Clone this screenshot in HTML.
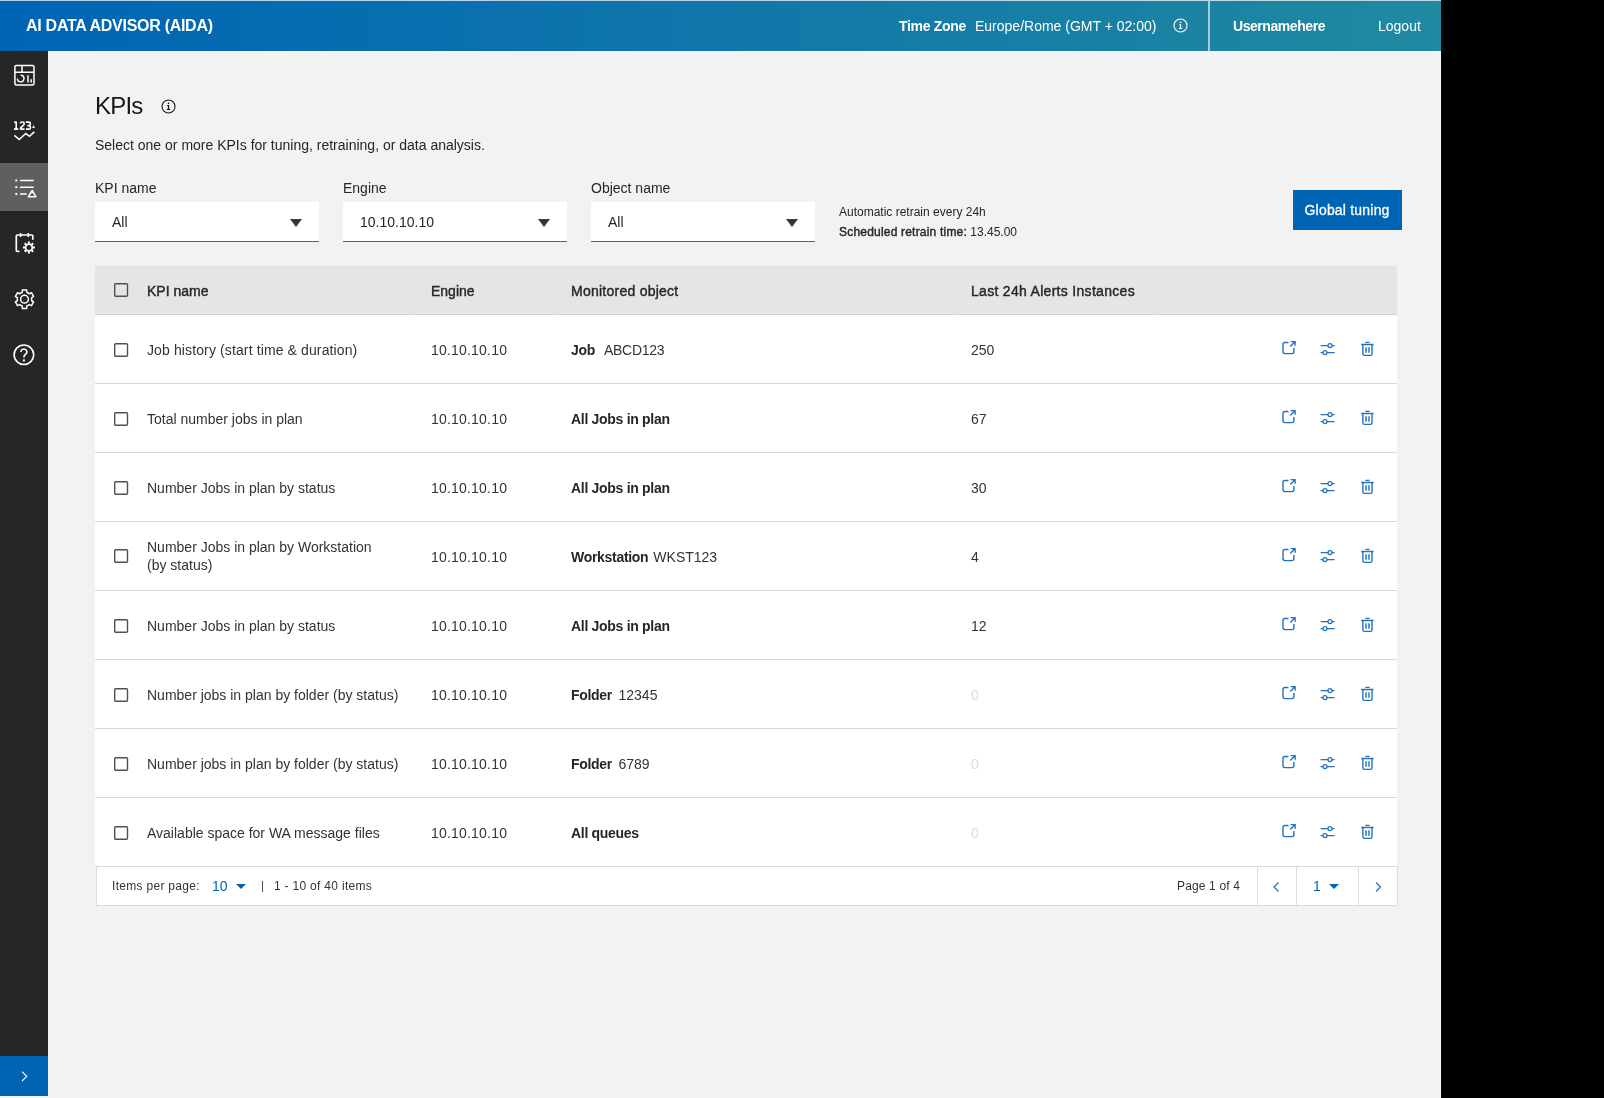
<!DOCTYPE html>
<html><head><meta charset="utf-8"><style>
*{box-sizing:border-box;margin:0;padding:0}
html,body{width:1604px;height:1098px;overflow:hidden;background:#000;font-family:"Liberation Sans",sans-serif;color:#262626}
.abs{position:absolute}
#page{position:absolute;left:0;top:0;width:1441px;height:1098px;background:#f2f2f2;overflow:hidden;will-change:transform}
#hdr{position:absolute;left:0;top:0;width:1441px;height:51px;background:linear-gradient(90deg,#0064b4 0%,#2189a0 100%)}
.ht{position:absolute;color:#fff;font-size:14px;white-space:nowrap;line-height:16px}
.b{-webkit-text-stroke:0.45px currentColor}
.m{-webkit-text-stroke:0.3px currentColor}
#side{position:absolute;left:0;top:51px;width:48px;height:1045px;background:#262626}
.t{position:absolute;white-space:nowrap;font-size:14px;line-height:16px;color:#333333}
.dd{position:absolute;top:202px;width:224px;height:40px;background:#fff;border-bottom:1px solid #626262}
.dd span{position:absolute;left:17px;top:12px;font-size:14px;line-height:16px;color:#262626}
.dd i{position:absolute;left:194.5px;top:17px;width:0;height:0;border-left:6px solid transparent;border-right:6px solid transparent;border-top:8px solid #363636}
#tbl{position:absolute;left:95px;top:266px;width:1302px;height:600px;background:#fff}
.th{position:absolute;left:0;top:0;width:1302px;height:49px;background:#e5e5e5;border-bottom:1px solid #d0d0d0}
.row{position:absolute;left:0;width:1302px;height:69px;border-bottom:1px solid #d8d8d8}
.cb{position:absolute;left:19.4px;width:14px;height:14px}
.c{position:absolute;white-space:nowrap;font-size:14px;line-height:16px;color:#333333}
.ic{position:absolute}
.ob{font-weight:700;letter-spacing:-0.3px;color:#262626}
#pg{position:absolute;left:96px;top:866px;width:1302px;height:40px;background:#fff;border:1px solid #dcdcdc}
.p{position:absolute;white-space:nowrap;font-size:12px;line-height:14px;color:#333333;letter-spacing:0.3px}
</style></head><body>
<div id="page">
<div id="hdr">
<div class="abs" style="left:0;top:0;width:1441px;height:1px;background:rgba(255,255,255,0.7)"></div>
<div class="ht" style="left:26px;top:17.5px;font-size:16px;font-weight:700;letter-spacing:-0.28px">AI DATA ADVISOR (AIDA)</div>
<div class="ht" style="left:899px;top:17.5px;font-weight:700;letter-spacing:-0.3px">Time Zone</div>
<div class="ht" style="left:975px;top:18px">Europe/Rome (GMT + 02:00)</div>
<svg class="abs" style="left:1173px;top:18px" width="15" height="15" viewBox="0 0 15 15"><circle cx="7.5" cy="7.5" r="6.5" fill="none" stroke="#fff" stroke-width="1.1"/><rect x="6.9" y="6.2" width="1.25" height="4.2" fill="#fff"/><circle cx="7.5" cy="4.4" r=".8" fill="#fff"/><rect x="5.9" y="9.9" width="3.3" height="1.1" fill="#fff"/><rect x="6.2" y="6.2" width="1.5" height="1" fill="#fff"/></svg>
<div class="abs" style="left:1208px;top:1px;width:2px;height:50px;background:#a8ccdb"></div>
<div class="ht" style="left:1233px;top:17.5px;font-weight:700;letter-spacing:-0.44px">Usernamehere</div>
<div class="ht" style="left:1378px;top:18px">Logout</div>
</div>
<div id="side">
<div class="abs" style="left:0;top:112px;width:48px;height:48px;background:#5f5f5f"></div>
<div class="abs" style="left:0;top:1005px;width:48px;height:40px;background:#0064b4"></div>
</div>
<svg class="abs" style="left:0;top:51px" width="48" height="1045" viewBox="0 51 48 1045" fill="none" stroke="#fff" stroke-width="1.5">
<rect x="14.9" y="65.6" width="19.1" height="19.3" rx="1.5"/>
<path d="M14.9 72.3 H34 M22 65.6 V72.3"/>
<path d="M20.7 75.3 A3.3 3.3 0 1 1 17.4 78.6" stroke-width="1.4"/>
<path d="M28 75.3 V82.6 M31.2 79.3 V82.6" stroke-width="1.5"/>
<path d="M14.1 122.6 L16.2 122 V129.4 M14 129.1 H18.3 M20.4 123.5 Q20.5 122 22.1 122 H22.7 Q24.2 122 24.2 123.6 Q24.2 124.7 23.1 125.6 L20.6 127.8 V129.1 H24.5 M25.9 122.1 H28.8 Q30.3 122.1 30.3 123.6 V124.3 Q30.3 125.6 28.9 125.6 H27.4 M28.9 125.6 Q30.4 125.6 30.4 127.1 V127.7 Q30.4 129.1 28.9 129.1 H25.9" stroke-width="1.6" stroke-linejoin="round"/>
<path d="M32.1 127.9 L33.55 125.1 L35 127.9Z" fill="#fff" stroke="none"/>
<path d="M14.4 135.3 L19.2 139.5 L25.8 133.5 L29.5 136.3 L34.3 131.8" stroke-width="1.6"/>
<g fill="#fff" stroke="none"><rect x="15.3" y="179.5" width="2" height="2"/><rect x="15.3" y="186.2" width="2" height="2"/><rect x="15.3" y="192.9" width="2" height="2"/></g>
<path d="M20 180.5 H33.7 M20 187.2 H33.7 M20 193.9 H26.6" stroke-width="1.5"/>
<path d="M32.15 190.5 L28.3 196.8 H36 Z" stroke-width="1.45" stroke-linejoin="round"/>
<path d="M19.5 251.3 H17.3 Q16.3 251.3 16.3 250.3 V236 Q16.3 235 17.3 235 H31.8 Q32.8 235 32.8 236 V239.7" stroke-width="1.7"/>
<path d="M20.6 233 V237 M28.3 233 V237" stroke-width="1.6"/>
<circle cx="28.9" cy="247.5" r="3.4" stroke-width="1.8"/>
<path d="M32.90 247.50 L34.90 247.50 M31.73 250.33 L33.14 251.74 M28.90 251.50 L28.90 253.50 M26.07 250.33 L24.66 251.74 M24.90 247.50 L22.90 247.50 M26.07 244.67 L24.66 243.26 M28.90 243.50 L28.90 241.50 M31.73 244.67 L33.14 243.26" stroke-width="2"/>
<path d="M28.10 292.96 L26.84 292.39 L26.64 289.94 L22.36 289.94 L22.16 292.39 L20.90 292.96 L19.78 293.77 L17.55 292.72 L15.42 296.42 L17.43 297.83 L17.30 299.20 L17.43 300.57 L15.42 301.98 L17.55 305.68 L19.78 304.63 L20.90 305.44 L22.16 306.01 L22.36 308.46 L26.64 308.46 L26.84 306.01 L28.10 305.44 L29.22 304.63 L31.45 305.68 L33.58 301.98 L31.57 300.57 L31.70 299.20 L31.57 297.83 L33.58 296.42 L31.45 292.72 L29.22 293.77Z" stroke-width="1.5" stroke-linejoin="round"/>
<circle cx="24.5" cy="299.2" r="3.9" stroke-width="1.5"/>
<circle cx="23.9" cy="354.75" r="9.8" stroke-width="1.6"/>
<path d="M20.9 351.9 A3 2.9 0 1 1 25.6 354.3 Q23.9 355.3 23.9 357.4" stroke-width="1.6"/>
<rect x="22.9" y="359.4" width="2" height="2" fill="#fff" stroke="none"/>
<path d="M22 1071.6 L26.8 1076.3 L22 1081" stroke-width="1.1"/>
</svg>
<div class="t" style="left:95px;top:94px;font-size:24px;line-height:24px;color:#161616;letter-spacing:-0.8px">KPIs</div>
<svg class="abs" style="left:161px;top:99px" width="15" height="15" viewBox="0 0 15 15"><circle cx="7.5" cy="7.5" r="6.5" fill="none" stroke="#161616" stroke-width="1.1"/><rect x="6.9" y="6.2" width="1.25" height="4.2" fill="#161616"/><circle cx="7.5" cy="4.4" r=".8" fill="#161616"/><rect x="5.9" y="9.9" width="3.3" height="1.1" fill="#161616"/><rect x="6.2" y="6.2" width="1.5" height="1" fill="#161616"/></svg>
<div class="t" style="left:95px;top:137px;color:#262626">Select one or more KPIs for tuning, retraining, or data analysis.</div>
<div class="t" style="left:95px;top:180px;color:#262626">KPI name</div>
<div class="t" style="left:343px;top:180px;color:#262626">Engine</div>
<div class="t" style="left:591px;top:180px;color:#262626">Object name</div>
<div class="dd" style="left:95px"><span>All</span><i></i></div>
<div class="dd" style="left:343px"><span>10.10.10.10</span><i></i></div>
<div class="dd" style="left:591px"><span>All</span><i></i></div>
<div class="t" style="left:839px;top:205px;font-size:12px;line-height:14px;color:#262626">Automatic retrain every 24h</div>
<div class="t" style="left:839px;top:225px;font-size:12px;line-height:14px;color:#262626"><span class="b" style="-webkit-text-stroke-width:0.4px;letter-spacing:0.2px">Scheduled retrain time:</span> 13.45.00</div>
<div class="abs" style="left:1292.5px;top:190px;width:109px;height:40px;background:#0064b4"></div>
<div class="ht m" style="left:1304.5px;top:202px;letter-spacing:0.2px">Global tuning</div>
<div id="tbl">
<div class="th">
<div class="cb" style="top:17px"><svg width="15" height="14" viewBox="0 0 15 14"><rect x="0.7" y="0.7" width="12.8" height="12.6" rx="1" fill="none" stroke="#505050" stroke-width="1.4"/></svg></div>
<div class="c m" style="left:52px;top:16.5px;color:#262626;letter-spacing:0px;-webkit-text-stroke-width:0.4px">KPI name</div>
<div class="c m" style="left:336px;top:16.5px;color:#262626;letter-spacing:0px;-webkit-text-stroke-width:0.4px">Engine</div>
<div class="c m" style="left:476px;top:16.5px;color:#262626;letter-spacing:0.25px;-webkit-text-stroke-width:0.4px">Monitored object</div>
<div class="c m" style="left:876px;top:16.5px;color:#262626;letter-spacing:0.3px;-webkit-text-stroke-width:0.4px">Last 24h Alerts Instances</div>
</div>
<div class="row" style="top:49px">
<div class="cb" style="top:28px"><svg width="15" height="14" viewBox="0 0 15 14"><rect x="0.7" y="0.7" width="12.8" height="12.6" rx="1" fill="none" stroke="#505050" stroke-width="1.4"/></svg></div>
<div class="c" style="left:52px;top:26.5px;letter-spacing:0.12px">Job history (start time &amp; duration)</div>
<div class="c" style="left:336px;top:26.5px;letter-spacing:0.2px">10.10.10.10</div>
<div class="c" style="left:476px;top:26.5px"><b class="ob">Job</b><span style="margin-left:9px;letter-spacing:-0.3px">ABCD123</span></div>
<div class="c" style="left:876px;top:26.5px;color:#333333">250</div>
</div>
<div class="row" style="top:118px">
<div class="cb" style="top:28px"><svg width="15" height="14" viewBox="0 0 15 14"><rect x="0.7" y="0.7" width="12.8" height="12.6" rx="1" fill="none" stroke="#505050" stroke-width="1.4"/></svg></div>
<div class="c" style="left:52px;top:26.5px;letter-spacing:0px">Total number jobs in plan</div>
<div class="c" style="left:336px;top:26.5px;letter-spacing:0.2px">10.10.10.10</div>
<div class="c" style="left:476px;top:26.5px"><b class="ob">All Jobs in plan</b></div>
<div class="c" style="left:876px;top:26.5px;color:#333333">67</div>
</div>
<div class="row" style="top:187px">
<div class="cb" style="top:28px"><svg width="15" height="14" viewBox="0 0 15 14"><rect x="0.7" y="0.7" width="12.8" height="12.6" rx="1" fill="none" stroke="#505050" stroke-width="1.4"/></svg></div>
<div class="c" style="left:52px;top:26.5px;letter-spacing:0px">Number Jobs in plan by status</div>
<div class="c" style="left:336px;top:26.5px;letter-spacing:0.2px">10.10.10.10</div>
<div class="c" style="left:476px;top:26.5px"><b class="ob">All Jobs in plan</b></div>
<div class="c" style="left:876px;top:26.5px;color:#333333">30</div>
</div>
<div class="row" style="top:256px">
<div class="cb" style="top:27px"><svg width="15" height="14" viewBox="0 0 15 14"><rect x="0.7" y="0.7" width="12.8" height="12.6" rx="1" fill="none" stroke="#505050" stroke-width="1.4"/></svg></div>
<div class="c" style="left:52px;top:17px;line-height:17.5px">Number Jobs in plan by Workstation<br>(by status)</div>
<div class="c" style="left:336px;top:26.5px;letter-spacing:0.2px">10.10.10.10</div>
<div class="c" style="left:476px;top:26.5px"><b class="ob">Workstation</b><span style="margin-left:5px">WKST123</span></div>
<div class="c" style="left:876px;top:26.5px;color:#333333">4</div>
</div>
<div class="row" style="top:325px">
<div class="cb" style="top:28px"><svg width="15" height="14" viewBox="0 0 15 14"><rect x="0.7" y="0.7" width="12.8" height="12.6" rx="1" fill="none" stroke="#505050" stroke-width="1.4"/></svg></div>
<div class="c" style="left:52px;top:26.5px;letter-spacing:0px">Number Jobs in plan by status</div>
<div class="c" style="left:336px;top:26.5px;letter-spacing:0.2px">10.10.10.10</div>
<div class="c" style="left:476px;top:26.5px"><b class="ob">All Jobs in plan</b></div>
<div class="c" style="left:876px;top:26.5px;color:#333333">12</div>
</div>
<div class="row" style="top:394px">
<div class="cb" style="top:28px"><svg width="15" height="14" viewBox="0 0 15 14"><rect x="0.7" y="0.7" width="12.8" height="12.6" rx="1" fill="none" stroke="#505050" stroke-width="1.4"/></svg></div>
<div class="c" style="left:52px;top:26.5px;letter-spacing:0px">Number jobs in plan by folder (by status)</div>
<div class="c" style="left:336px;top:26.5px;letter-spacing:0.2px">10.10.10.10</div>
<div class="c" style="left:476px;top:26.5px"><b class="ob">Folder</b><span style="margin-left:6.5px">12345</span></div>
<div class="c" style="left:876px;top:26.5px;color:#dcdcdc">0</div>
</div>
<div class="row" style="top:463px">
<div class="cb" style="top:28px"><svg width="15" height="14" viewBox="0 0 15 14"><rect x="0.7" y="0.7" width="12.8" height="12.6" rx="1" fill="none" stroke="#505050" stroke-width="1.4"/></svg></div>
<div class="c" style="left:52px;top:26.5px;letter-spacing:0px">Number jobs in plan by folder (by status)</div>
<div class="c" style="left:336px;top:26.5px;letter-spacing:0.2px">10.10.10.10</div>
<div class="c" style="left:476px;top:26.5px"><b class="ob">Folder</b><span style="margin-left:6.5px">6789</span></div>
<div class="c" style="left:876px;top:26.5px;color:#dcdcdc">0</div>
</div>
<div class="row" style="top:532px">
<div class="cb" style="top:28px"><svg width="15" height="14" viewBox="0 0 15 14"><rect x="0.7" y="0.7" width="12.8" height="12.6" rx="1" fill="none" stroke="#505050" stroke-width="1.4"/></svg></div>
<div class="c" style="left:52px;top:26.5px;letter-spacing:0px">Available space for WA message files</div>
<div class="c" style="left:336px;top:26.5px;letter-spacing:0.2px">10.10.10.10</div>
<div class="c" style="left:476px;top:26.5px"><b class="ob">All queues</b></div>
<div class="c" style="left:876px;top:26.5px;color:#dcdcdc">0</div>
</div>
</div>
<svg class="ic" style="left:1278px;top:337px" width="22" height="22" viewBox="0 0 22 22" fill="none" stroke="#2372bf" stroke-width="1.4"><path d="M10.5 5.5 H7 Q5 5.5 5 7.5 V14.6 Q5 16.6 7 16.6 H13.9 Q15.9 16.6 15.9 14.6 V11"/><path d="M12.3 9.4 L16.6 5.1 M12.6 4.6 H17.1 V8.8"/></svg>
<svg class="ic" style="left:1316px;top:337px" width="22" height="22" viewBox="0 0 22 22" fill="none" stroke="#2372bf" stroke-width="1.3"><path d="M4.6 8.6 H12 M16 8.6 H18.6 M4.6 15.6 H7 M11 15.6 H18.6"/><circle cx="14" cy="8.6" r="2"/><circle cx="9" cy="15.6" r="2"/></svg>
<svg class="ic" style="left:1356px;top:337px" width="22" height="22" viewBox="0 0 22 22" fill="none" stroke="#2372bf" stroke-width="1.4"><path d="M9.4 5.4 H13.6 M5.2 7.5 H17.6"/><path d="M6.9 7.5 V16.8 Q6.9 18.4 8.5 18.4 H14.4 Q16 18.4 16 16.8 V7.5"/><path d="M10 10.2 V15.8 M13 10.2 V15.8" stroke-width="1.45"/></svg>
<svg class="ic" style="left:1278px;top:406px" width="22" height="22" viewBox="0 0 22 22" fill="none" stroke="#2372bf" stroke-width="1.4"><path d="M10.5 5.5 H7 Q5 5.5 5 7.5 V14.6 Q5 16.6 7 16.6 H13.9 Q15.9 16.6 15.9 14.6 V11"/><path d="M12.3 9.4 L16.6 5.1 M12.6 4.6 H17.1 V8.8"/></svg>
<svg class="ic" style="left:1316px;top:406px" width="22" height="22" viewBox="0 0 22 22" fill="none" stroke="#2372bf" stroke-width="1.3"><path d="M4.6 8.6 H12 M16 8.6 H18.6 M4.6 15.6 H7 M11 15.6 H18.6"/><circle cx="14" cy="8.6" r="2"/><circle cx="9" cy="15.6" r="2"/></svg>
<svg class="ic" style="left:1356px;top:406px" width="22" height="22" viewBox="0 0 22 22" fill="none" stroke="#2372bf" stroke-width="1.4"><path d="M9.4 5.4 H13.6 M5.2 7.5 H17.6"/><path d="M6.9 7.5 V16.8 Q6.9 18.4 8.5 18.4 H14.4 Q16 18.4 16 16.8 V7.5"/><path d="M10 10.2 V15.8 M13 10.2 V15.8" stroke-width="1.45"/></svg>
<svg class="ic" style="left:1278px;top:475px" width="22" height="22" viewBox="0 0 22 22" fill="none" stroke="#2372bf" stroke-width="1.4"><path d="M10.5 5.5 H7 Q5 5.5 5 7.5 V14.6 Q5 16.6 7 16.6 H13.9 Q15.9 16.6 15.9 14.6 V11"/><path d="M12.3 9.4 L16.6 5.1 M12.6 4.6 H17.1 V8.8"/></svg>
<svg class="ic" style="left:1316px;top:475px" width="22" height="22" viewBox="0 0 22 22" fill="none" stroke="#2372bf" stroke-width="1.3"><path d="M4.6 8.6 H12 M16 8.6 H18.6 M4.6 15.6 H7 M11 15.6 H18.6"/><circle cx="14" cy="8.6" r="2"/><circle cx="9" cy="15.6" r="2"/></svg>
<svg class="ic" style="left:1356px;top:475px" width="22" height="22" viewBox="0 0 22 22" fill="none" stroke="#2372bf" stroke-width="1.4"><path d="M9.4 5.4 H13.6 M5.2 7.5 H17.6"/><path d="M6.9 7.5 V16.8 Q6.9 18.4 8.5 18.4 H14.4 Q16 18.4 16 16.8 V7.5"/><path d="M10 10.2 V15.8 M13 10.2 V15.8" stroke-width="1.45"/></svg>
<svg class="ic" style="left:1278px;top:544px" width="22" height="22" viewBox="0 0 22 22" fill="none" stroke="#2372bf" stroke-width="1.4"><path d="M10.5 5.5 H7 Q5 5.5 5 7.5 V14.6 Q5 16.6 7 16.6 H13.9 Q15.9 16.6 15.9 14.6 V11"/><path d="M12.3 9.4 L16.6 5.1 M12.6 4.6 H17.1 V8.8"/></svg>
<svg class="ic" style="left:1316px;top:544px" width="22" height="22" viewBox="0 0 22 22" fill="none" stroke="#2372bf" stroke-width="1.3"><path d="M4.6 8.6 H12 M16 8.6 H18.6 M4.6 15.6 H7 M11 15.6 H18.6"/><circle cx="14" cy="8.6" r="2"/><circle cx="9" cy="15.6" r="2"/></svg>
<svg class="ic" style="left:1356px;top:544px" width="22" height="22" viewBox="0 0 22 22" fill="none" stroke="#2372bf" stroke-width="1.4"><path d="M9.4 5.4 H13.6 M5.2 7.5 H17.6"/><path d="M6.9 7.5 V16.8 Q6.9 18.4 8.5 18.4 H14.4 Q16 18.4 16 16.8 V7.5"/><path d="M10 10.2 V15.8 M13 10.2 V15.8" stroke-width="1.45"/></svg>
<svg class="ic" style="left:1278px;top:613px" width="22" height="22" viewBox="0 0 22 22" fill="none" stroke="#2372bf" stroke-width="1.4"><path d="M10.5 5.5 H7 Q5 5.5 5 7.5 V14.6 Q5 16.6 7 16.6 H13.9 Q15.9 16.6 15.9 14.6 V11"/><path d="M12.3 9.4 L16.6 5.1 M12.6 4.6 H17.1 V8.8"/></svg>
<svg class="ic" style="left:1316px;top:613px" width="22" height="22" viewBox="0 0 22 22" fill="none" stroke="#2372bf" stroke-width="1.3"><path d="M4.6 8.6 H12 M16 8.6 H18.6 M4.6 15.6 H7 M11 15.6 H18.6"/><circle cx="14" cy="8.6" r="2"/><circle cx="9" cy="15.6" r="2"/></svg>
<svg class="ic" style="left:1356px;top:613px" width="22" height="22" viewBox="0 0 22 22" fill="none" stroke="#2372bf" stroke-width="1.4"><path d="M9.4 5.4 H13.6 M5.2 7.5 H17.6"/><path d="M6.9 7.5 V16.8 Q6.9 18.4 8.5 18.4 H14.4 Q16 18.4 16 16.8 V7.5"/><path d="M10 10.2 V15.8 M13 10.2 V15.8" stroke-width="1.45"/></svg>
<svg class="ic" style="left:1278px;top:682px" width="22" height="22" viewBox="0 0 22 22" fill="none" stroke="#2372bf" stroke-width="1.4"><path d="M10.5 5.5 H7 Q5 5.5 5 7.5 V14.6 Q5 16.6 7 16.6 H13.9 Q15.9 16.6 15.9 14.6 V11"/><path d="M12.3 9.4 L16.6 5.1 M12.6 4.6 H17.1 V8.8"/></svg>
<svg class="ic" style="left:1316px;top:682px" width="22" height="22" viewBox="0 0 22 22" fill="none" stroke="#2372bf" stroke-width="1.3"><path d="M4.6 8.6 H12 M16 8.6 H18.6 M4.6 15.6 H7 M11 15.6 H18.6"/><circle cx="14" cy="8.6" r="2"/><circle cx="9" cy="15.6" r="2"/></svg>
<svg class="ic" style="left:1356px;top:682px" width="22" height="22" viewBox="0 0 22 22" fill="none" stroke="#2372bf" stroke-width="1.4"><path d="M9.4 5.4 H13.6 M5.2 7.5 H17.6"/><path d="M6.9 7.5 V16.8 Q6.9 18.4 8.5 18.4 H14.4 Q16 18.4 16 16.8 V7.5"/><path d="M10 10.2 V15.8 M13 10.2 V15.8" stroke-width="1.45"/></svg>
<svg class="ic" style="left:1278px;top:751px" width="22" height="22" viewBox="0 0 22 22" fill="none" stroke="#2372bf" stroke-width="1.4"><path d="M10.5 5.5 H7 Q5 5.5 5 7.5 V14.6 Q5 16.6 7 16.6 H13.9 Q15.9 16.6 15.9 14.6 V11"/><path d="M12.3 9.4 L16.6 5.1 M12.6 4.6 H17.1 V8.8"/></svg>
<svg class="ic" style="left:1316px;top:751px" width="22" height="22" viewBox="0 0 22 22" fill="none" stroke="#2372bf" stroke-width="1.3"><path d="M4.6 8.6 H12 M16 8.6 H18.6 M4.6 15.6 H7 M11 15.6 H18.6"/><circle cx="14" cy="8.6" r="2"/><circle cx="9" cy="15.6" r="2"/></svg>
<svg class="ic" style="left:1356px;top:751px" width="22" height="22" viewBox="0 0 22 22" fill="none" stroke="#2372bf" stroke-width="1.4"><path d="M9.4 5.4 H13.6 M5.2 7.5 H17.6"/><path d="M6.9 7.5 V16.8 Q6.9 18.4 8.5 18.4 H14.4 Q16 18.4 16 16.8 V7.5"/><path d="M10 10.2 V15.8 M13 10.2 V15.8" stroke-width="1.45"/></svg>
<svg class="ic" style="left:1278px;top:820px" width="22" height="22" viewBox="0 0 22 22" fill="none" stroke="#2372bf" stroke-width="1.4"><path d="M10.5 5.5 H7 Q5 5.5 5 7.5 V14.6 Q5 16.6 7 16.6 H13.9 Q15.9 16.6 15.9 14.6 V11"/><path d="M12.3 9.4 L16.6 5.1 M12.6 4.6 H17.1 V8.8"/></svg>
<svg class="ic" style="left:1316px;top:820px" width="22" height="22" viewBox="0 0 22 22" fill="none" stroke="#2372bf" stroke-width="1.3"><path d="M4.6 8.6 H12 M16 8.6 H18.6 M4.6 15.6 H7 M11 15.6 H18.6"/><circle cx="14" cy="8.6" r="2"/><circle cx="9" cy="15.6" r="2"/></svg>
<svg class="ic" style="left:1356px;top:820px" width="22" height="22" viewBox="0 0 22 22" fill="none" stroke="#2372bf" stroke-width="1.4"><path d="M9.4 5.4 H13.6 M5.2 7.5 H17.6"/><path d="M6.9 7.5 V16.8 Q6.9 18.4 8.5 18.4 H14.4 Q16 18.4 16 16.8 V7.5"/><path d="M10 10.2 V15.8 M13 10.2 V15.8" stroke-width="1.45"/></svg>
<div class="abs" style="left:415px;top:314px;width:1px;height:1px;background:#e8e8e8"></div>
<div class="abs" style="left:555px;top:314px;width:1px;height:1px;background:#e8e8e8"></div>
<div class="abs" style="left:955px;top:314px;width:1px;height:1px;background:#e8e8e8"></div>
<div class="abs" style="left:1155px;top:314px;width:1px;height:1px;background:#e8e8e8"></div>
<div class="abs" style="left:415px;top:383px;width:1px;height:1px;background:#e8e8e8"></div>
<div class="abs" style="left:555px;top:383px;width:1px;height:1px;background:#e8e8e8"></div>
<div class="abs" style="left:955px;top:383px;width:1px;height:1px;background:#e8e8e8"></div>
<div class="abs" style="left:1155px;top:383px;width:1px;height:1px;background:#e8e8e8"></div>
<div class="abs" style="left:415px;top:452px;width:1px;height:1px;background:#e8e8e8"></div>
<div class="abs" style="left:555px;top:452px;width:1px;height:1px;background:#e8e8e8"></div>
<div class="abs" style="left:955px;top:452px;width:1px;height:1px;background:#e8e8e8"></div>
<div class="abs" style="left:1155px;top:452px;width:1px;height:1px;background:#e8e8e8"></div>
<div class="abs" style="left:415px;top:521px;width:1px;height:1px;background:#e8e8e8"></div>
<div class="abs" style="left:555px;top:521px;width:1px;height:1px;background:#e8e8e8"></div>
<div class="abs" style="left:955px;top:521px;width:1px;height:1px;background:#e8e8e8"></div>
<div class="abs" style="left:1155px;top:521px;width:1px;height:1px;background:#e8e8e8"></div>
<div class="abs" style="left:415px;top:590px;width:1px;height:1px;background:#e8e8e8"></div>
<div class="abs" style="left:555px;top:590px;width:1px;height:1px;background:#e8e8e8"></div>
<div class="abs" style="left:955px;top:590px;width:1px;height:1px;background:#e8e8e8"></div>
<div class="abs" style="left:1155px;top:590px;width:1px;height:1px;background:#e8e8e8"></div>
<div class="abs" style="left:415px;top:659px;width:1px;height:1px;background:#e8e8e8"></div>
<div class="abs" style="left:555px;top:659px;width:1px;height:1px;background:#e8e8e8"></div>
<div class="abs" style="left:955px;top:659px;width:1px;height:1px;background:#e8e8e8"></div>
<div class="abs" style="left:1155px;top:659px;width:1px;height:1px;background:#e8e8e8"></div>
<div class="abs" style="left:415px;top:728px;width:1px;height:1px;background:#e8e8e8"></div>
<div class="abs" style="left:555px;top:728px;width:1px;height:1px;background:#e8e8e8"></div>
<div class="abs" style="left:955px;top:728px;width:1px;height:1px;background:#e8e8e8"></div>
<div class="abs" style="left:1155px;top:728px;width:1px;height:1px;background:#e8e8e8"></div>
<div class="abs" style="left:415px;top:797px;width:1px;height:1px;background:#e8e8e8"></div>
<div class="abs" style="left:555px;top:797px;width:1px;height:1px;background:#e8e8e8"></div>
<div class="abs" style="left:955px;top:797px;width:1px;height:1px;background:#e8e8e8"></div>
<div class="abs" style="left:1155px;top:797px;width:1px;height:1px;background:#e8e8e8"></div>
<div id="pg">
<div class="p" style="left:15px;top:12px">Items per page:</div>
<div class="c" style="left:115px;top:11px;color:#0064b4">10</div>
<div class="abs" style="left:139px;top:17px;width:0;height:0;border-left:5px solid transparent;border-right:5px solid transparent;border-top:5px solid #0064b4"></div>
<div class="abs" style="left:165px;top:14px;width:1px;height:11px;background:#555"></div>
<div class="p" style="left:177px;top:12px">1 - 10 of 40 items</div>
<div class="p" style="left:1080px;top:12px;letter-spacing:0.15px">Page 1 of 4</div>
<div class="abs" style="left:1160px;top:0;width:1px;height:38px;background:#dcdcdc"></div>
<div class="abs" style="left:1199px;top:0;width:1px;height:38px;background:#dcdcdc"></div>
<div class="abs" style="left:1261px;top:0;width:1px;height:38px;background:#dcdcdc"></div>
<div class="c" style="left:1216px;top:11px;color:#0064b4">1</div>
<div class="abs" style="left:1232px;top:17px;width:0;height:0;border-left:5px solid transparent;border-right:5px solid transparent;border-top:5px solid #0064b4"></div>
<svg class="abs" style="left:1172px;top:10px" width="20" height="20" viewBox="0 0 20 20" fill="none" stroke="#2372bf" stroke-width="1.2"><path d="M9.5 5.5 L5 10 L9.5 14.5"/></svg>
<svg class="abs" style="left:1271px;top:10px" width="20" height="20" viewBox="0 0 20 20" fill="none" stroke="#2372bf" stroke-width="1.2"><path d="M8 5.5 L12.5 10 L8 14.5"/></svg>
</div>
<div class="abs" style="left:1440px;top:51px;width:1px;height:1047px;background:#fafafa"></div>
</div>
</body></html>
